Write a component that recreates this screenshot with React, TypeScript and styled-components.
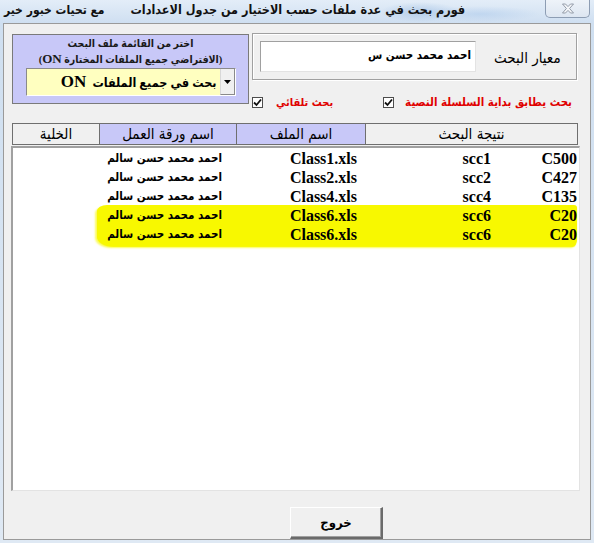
import React from 'react';
import styled, { createGlobalStyle } from 'styled-components';

const GlobalStyle = createGlobalStyle`
  html, body {
    margin: 0;
    padding: 0;
    background: #ffffff;
  }
  body {
    font-family: "DejaVu Sans", "Liberation Sans", sans-serif;
  }
`;

const ARABIC = `"DejaVu Sans Condensed", "DejaVu Sans", sans-serif`;
const SERIF = `"Liberation Serif", "DejaVu Sans Condensed", "DejaVu Sans", serif`;
const LAVENDER = '#c8c8f8';
const FACE = '#f0f0f0';

const Window = styled.div`
  width: 594px;
  height: 543px;
  display: flex;
  flex-direction: column;
  background: linear-gradient(180deg, #dce8f5 0px, #cfdff0 23px, #dfe9f4 100%);
  overflow: hidden;
  font-stretch: condensed;
`;

const TitleBar = styled.div`
  height: 23px;
  display: flex;
  align-items: flex-start;
  padding-left: 4px;
  background:
    radial-gradient(ellipse 40px 10px at 420px 12px, rgba(150, 185, 225, 0.55), transparent),
    radial-gradient(ellipse 60px 8px at 480px 14px, rgba(170, 200, 235, 0.5), transparent),
    linear-gradient(180deg, #e3edf8, #cfdff1);
`;

const TitleText = styled.span<{ $gap?: number; $size?: number }>`
  direction: rtl;
  font-family: ${ARABIC};
  font-weight: bold;
  font-size: ${p => p.$size ?? 12}px;
  color: #111;
  line-height: 20px;
  margin-left: ${p => p.$gap ?? 0}px;
  white-space: nowrap;
`;

const CloseButton = styled.div`
  margin-left: auto;
  margin-right: 4px;
  width: 45px;
  height: 18px;
  box-sizing: border-box;
  border: 1px solid #8d9db3;
  border-top: none;
  border-radius: 0 0 5px 5px;
  background: linear-gradient(180deg, #eef3f9, #dde6f1);
  display: flex;
  align-items: center;
  justify-content: center;
`;

const Client = styled.div`
  flex: 1;
  margin: 0 3px 3px 3px;
  background: ${FACE};
  border: 1px solid #9a9a9a;
  display: flex;
  flex-direction: column;
`;

const TopRow = styled.div`
  display: flex;
  align-items: flex-start;
  margin: 9px 0 0 8px;
  gap: 3px;
`;

const FileGroup = styled.div`
  flex-shrink: 0;
  margin-top: 1px;
  width: 237px;
  height: 70px;
  box-sizing: border-box;
  background: ${LAVENDER};
  border: 1px solid #7a7a7a;
  display: flex;
  flex-direction: column;
  align-items: center;
  padding-top: 1px;
`;

const GroupCaption = styled.div<{ $size: number }>`
  direction: rtl;
  font-family: ${SERIF};
  font-weight: bold;
  font-size: ${p => p.$size}px;
  line-height: 15px;
  color: #1a1a1a;
  white-space: nowrap;
`;

const Latin = styled.span<{ $size: number }>`
  font-family: "Liberation Serif", serif;
  font-stretch: normal;
  font-size: ${p => p.$size}px;
`;

const Combo = styled.div`
  margin-top: 1px;
  width: 210px;
  height: 28px;
  box-sizing: border-box;
  border-top: 1px solid #8a8a8a;
  border-left: 1px solid #8a8a8a;
  border-bottom: 1px solid #ffffff;
  border-right: 1px solid #ffffff;
  background: #ffffc0;
  display: flex;
`;

const ComboButton = styled.div`
  order: 2;
  width: 15px;
  box-sizing: border-box;
  background: ${FACE};
  border-left: 1px solid #d8d8d8;
  border-right: 1px solid #8a8a8a;
  border-bottom: 1px solid #8a8a8a;
  display: flex;
  align-items: center;
  justify-content: center;
`;

const ComboValue = styled.div`
  order: 1;
  flex: 1;
  direction: rtl;
  font-family: ${SERIF};
  font-weight: bold;
  font-size: 12.5px;
  line-height: 26px;
  padding-right: 3px;
  white-space: pre;
  color: #000;
`;

const RightColumn = styled.div`
  flex-shrink: 0;
  width: 325px;
  display: flex;
  flex-direction: column;
`;

const SearchFrame = styled.div`
  width: 325px;
  height: 47px;
  box-sizing: border-box;
  border: 1px solid #a0a0a0;
  box-shadow: inset 1px 1px 0 #ffffff, 1px 1px 0 #ffffff;
  display: flex;
  align-items: center;
  padding-left: 7px;
`;

const SearchInput = styled.div`
  width: 216px;
  height: 31px;
  box-sizing: border-box;
  background: #ffffff;
  border-top: 1px solid #a0a0a0;
  border-left: 1px solid #a0a0a0;
  border-bottom: 1px solid #e3e3e3;
  border-right: 1px solid #e3e3e3;
  direction: rtl;
  font-family: ${ARABIC};
  font-weight: bold;
  font-size: 11.5px;
  line-height: 27px;
  padding-right: 4px;
  color: #000;
`;

const FieldLabel = styled.div`
  direction: rtl;
  margin-left: 18px;
  margin-top: 2px;
  font-family: ${ARABIC};
  font-size: 15px;
  color: #000;
  white-space: nowrap;
`;

const OptionsRow = styled.div`
  display: flex;
  align-items: center;
  margin-top: 15px;
  height: 14px;
`;

const Option = styled.label<{ $gap: number }>`
  display: flex;
  align-items: center;
  margin-left: ${p => p.$gap}px;
`;

const CheckBox = styled.span`
  width: 11px;
  height: 11px;
  box-sizing: border-box;
  border: 1px solid #4d4d4d;
  background: #ffffff;
  display: flex;
  align-items: center;
  justify-content: center;
`;

const OptionText = styled.span<{ $gap: number; $size: number }>`
  direction: rtl;
  margin-left: ${p => p.$gap}px;
  font-family: ${ARABIC};
  font-weight: bold;
  font-size: ${p => p.$size}px;
  color: #e00000;
  white-space: nowrap;
`;

const Header = styled.div`
  margin: 14px 0 0 8px;
  width: 566px;
  height: 22px;
  box-sizing: border-box;
  border: 1px solid #6f6f6f;
  display: flex;
`;

const HeaderCell = styled.div<{ $width: number; $tint?: boolean; $last?: boolean }>`
  width: ${p => p.$width}px;
  flex: ${p => (p.$last ? 1 : 'none')};
  box-sizing: border-box;
  background: ${p => (p.$tint ? LAVENDER : FACE)};
  border-right: ${p => (p.$last ? 'none' : '1px solid #6f6f6f')};
  direction: rtl;
  text-align: center;
  font-family: ${ARABIC};
  font-size: 15px;
  line-height: 20px;
  color: #000;
`;

const ListBox = styled.div`
  position: relative;
  margin: 1px 0 0 7px;
  width: 569px;
  height: 345px;
  box-sizing: border-box;
  background: #ffffff;
  border-top: 2px solid #a0a0a0;
  border-left: 2px solid #a0a0a0;
  border-bottom: 1px solid #e3e3e3;
  border-right: 1px solid #e3e3e3;
  padding-top: 1px;
`;

const Marker = styled.div`
  position: absolute;
  left: 84px;
  right: 2px;
  top: 57px;
  height: 41px;
  background: #f8f800;
  border-radius: 10px 3px 4px 16px / 6px 3px 8px 10px;
  box-shadow: 0 1px 1px #f8f800, -2px 2px 2px rgba(248, 248, 0, 0.6);
`;

const Row = styled.div`
  position: relative;
  height: 19px;
  display: grid;
  grid-template-columns: 86px 134px 135px 1fr;
  direction: rtl;
  padding-right: 2px;
`;

const Cell = styled.span<{ $arabic?: boolean }>`
  text-align: right;
  font-family: ${p => (p.$arabic ? ARABIC : SERIF)};
  font-stretch: ${p => (p.$arabic ? 'condensed' : 'normal')};
  font-weight: bold;
  font-size: ${p => (p.$arabic ? 11.5 : 16)}px;
  line-height: 19px;
  color: #000;
  white-space: nowrap;
`;

const Footer = styled.div`
  display: flex;
  margin: 16px 0 0 286px;
`;

const ExitButton = styled.button`
  width: 93px;
  height: 32px;
  box-sizing: border-box;
  background: ${FACE};
  border-top: 1px solid #ffffff;
  border-left: 1px solid #ffffff;
  border-right: 2px solid #6a6a6a;
  border-bottom: 2px solid #6a6a6a;
  box-shadow: inset -1px -1px 0 #a0a0a0;
  direction: rtl;
  font-family: ${ARABIC};
  font-stretch: condensed;
  font-weight: bold;
  font-size: 13px;
  color: #000;
  padding: 0;
`;

const results = [
  ['C500', 'scc1', 'Class1.xls', 'احمد محمد حسن سالم'],
  ['C427', 'scc2', 'Class2.xls', 'احمد محمد حسن سالم'],
  ['C135', 'scc4', 'Class4.xls', 'احمد محمد حسن سالم'],
  ['C20', 'scc6', 'Class6.xls', 'احمد محمد حسن سالم'],
  ['C20', 'scc6', 'Class6.xls', 'احمد محمد حسن سالم'],
];

const Tick = () => (
  <svg width="9" height="9" viewBox="0 0 9 9">
    <path d="M1 4.5 L3.5 7 L8 1.5" fill="none" stroke="#111" strokeWidth="1.8" />
  </svg>
);

const App: React.FC = () => {
  return (
    <>
      <GlobalStyle />
      <Window>
        <TitleBar>
          <TitleText>مع تحيات خبور خير</TitleText>
          <TitleText $gap={26} $size={12.5}>فورم بحث في عدة ملفات حسب الاختيار من جدول الاعدادات</TitleText>
          <CloseButton>
            <svg width="14" height="11" viewBox="0 0 14 11">
              <path
                d="M1.5 1 L4.5 1 L7 3.6 L9.5 1 L12.5 1 L8.6 5.5 L12.5 10 L9.5 10 L7 7.4 L4.5 10 L1.5 10 L5.4 5.5 Z"
                fill="#f4f6f9"
                stroke="#8a93a0"
                strokeWidth="0.9"
              />
            </svg>
          </CloseButton>
        </TitleBar>

        <Client>
          <TopRow>
            <FileGroup>
              <GroupCaption $size={10.5}>اختر من القائمة  ملف البحث</GroupCaption>
              <GroupCaption $size={10.5}>
                (الافتراضي جميع الملفات المختارة <Latin $size={13}>ON</Latin>)
              </GroupCaption>
              <Combo>
                <ComboButton>
                  <svg width="7" height="4" viewBox="0 0 7 4">
                    <path d="M0 0 L7 0 L3.5 4 Z" fill="#000" />
                  </svg>
                </ComboButton>
                <ComboValue>
                  بحث في جميع الملفات  <Latin $size={17}>ON</Latin>
                </ComboValue>
              </Combo>
            </FileGroup>

            <RightColumn>
              <SearchFrame>
                <SearchInput>احمد محمد حسن س</SearchInput>
                <FieldLabel>معيار البحث</FieldLabel>
              </SearchFrame>
              <OptionsRow>
                <Option $gap={0}>
                  <CheckBox><Tick /></CheckBox>
                  <OptionText $gap={13} $size={11}>بحث تلقائي</OptionText>
                </Option>
                <Option $gap={50}>
                  <CheckBox><Tick /></CheckBox>
                  <OptionText $gap={11} $size={11.5}>بحث يطابق بداية السلسلة النصية</OptionText>
                </Option>
              </OptionsRow>
            </RightColumn>
          </TopRow>

          <Header>
            <HeaderCell $width={87}>الخلية</HeaderCell>
            <HeaderCell $width={137} $tint>اسم ورقة العمل</HeaderCell>
            <HeaderCell $width={129} $tint>اسم الملف</HeaderCell>
            <HeaderCell $width={213} $last>نتيجة البحث</HeaderCell>
          </Header>

          <ListBox>
            <Marker />
            {results.map((r, i) => (
              <Row key={i}>
                <Cell>{r[0]}</Cell>
                <Cell>{r[1]}</Cell>
                <Cell>{r[2]}</Cell>
                <Cell $arabic>{r[3]}</Cell>
              </Row>
            ))}
          </ListBox>

          <Footer>
            <ExitButton>خروج</ExitButton>
          </Footer>
        </Client>
      </Window>
    </>
  );
};

export default App;
